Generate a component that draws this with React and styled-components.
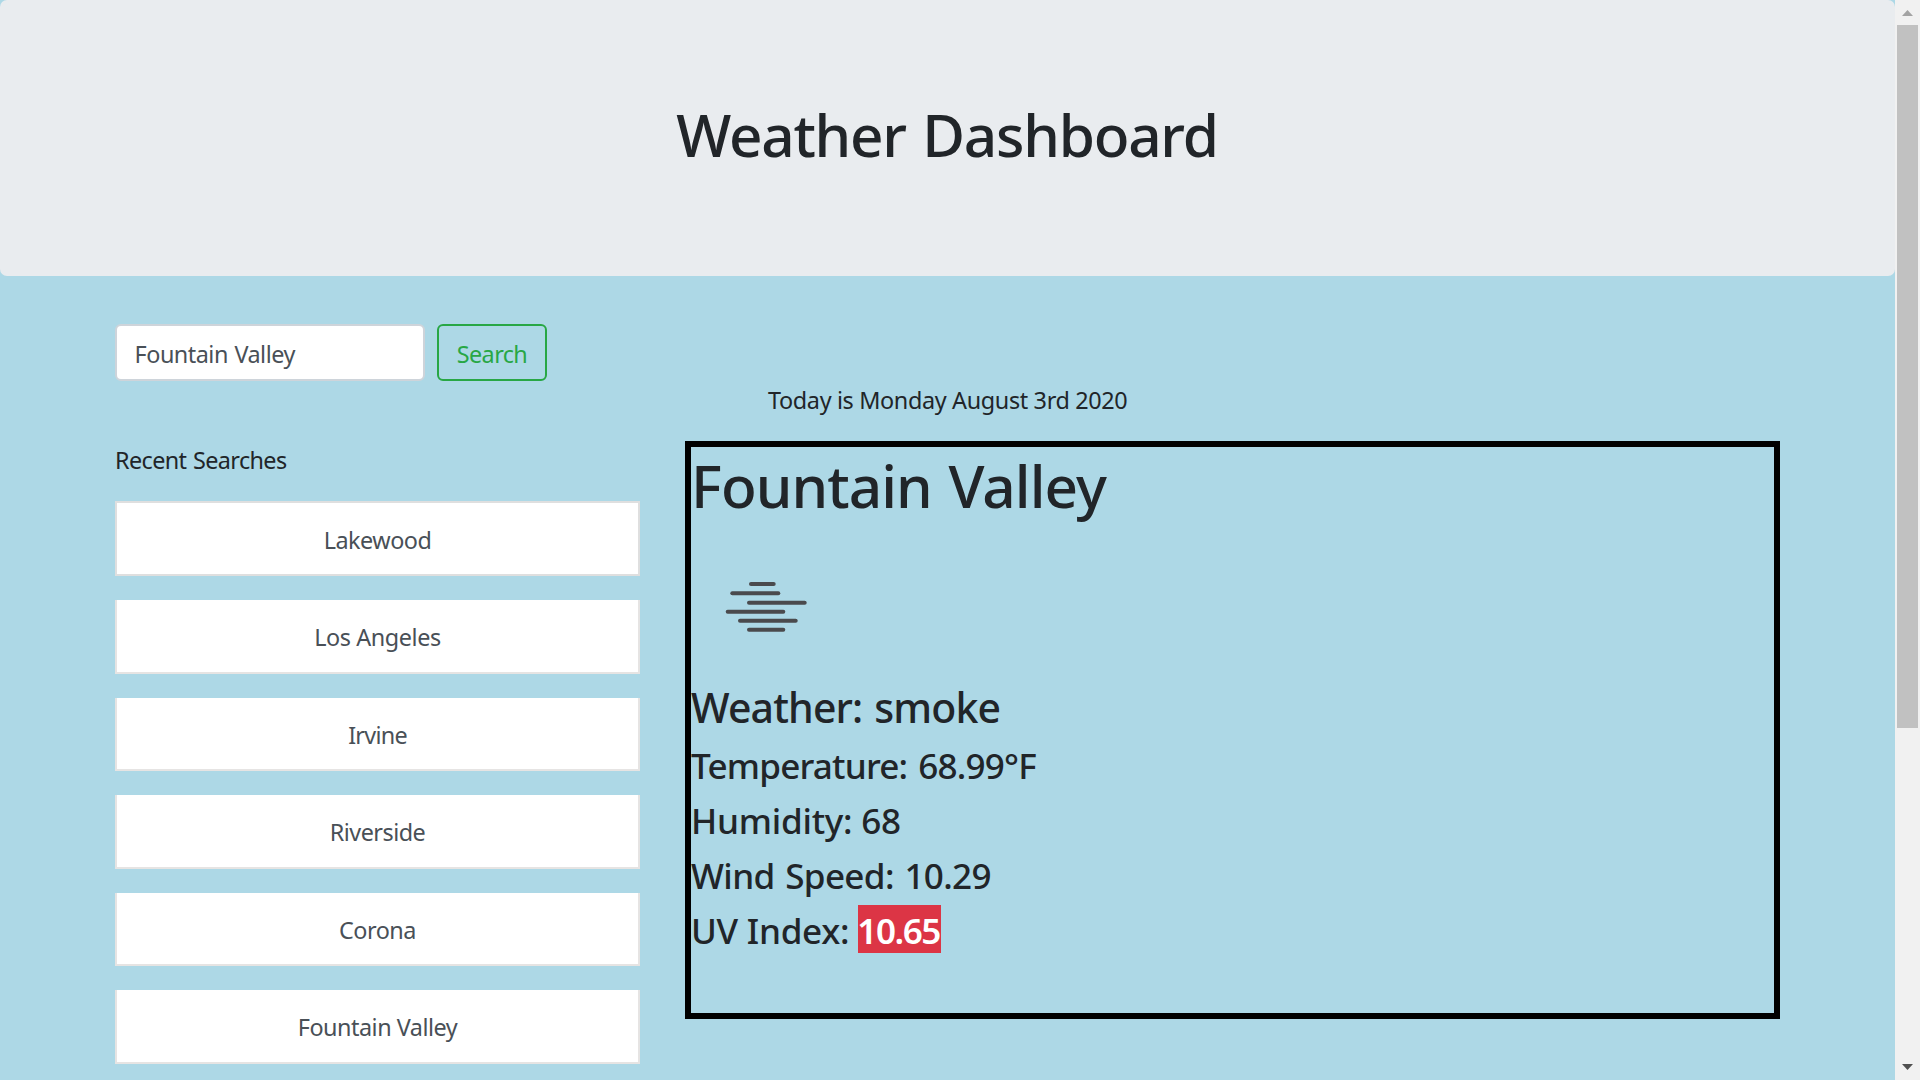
import React from "react";
import styled, { createGlobalStyle } from "styled-components";

const GlobalStyle = createGlobalStyle`
  *, *::before, *::after { box-sizing: border-box; }
  body {
    margin: 0;
    overflow: hidden;
    background: #add8e6;
    color: #212529;
    font-family: "Noto Sans", "Open Sans", sans-serif;
    font-size: 23.4px;
    line-height: 36px;
  }
`;

const Window = styled.div`
  display: flex;
  width: 1920px;
  height: 1080px;
  overflow: hidden;
`;

const Page = styled.div`
  flex: 1;
  min-width: 0;
`;

const Jumbotron = styled.header`
  height: 276px;
  padding: 98px 1px 0 0;
  border-radius: 7px;
  background: #e9ecef;
  text-align: center;
`;

const Heading = styled.h1`
  margin: 0;
  font-size: 58.5px;
  font-weight: 500;
  line-height: 72px;
  white-space: nowrap;
  word-spacing: 2.5px;
  letter-spacing: ${(p) => p.$tracking}px;
`;

const Main = styled.main`
  display: flex;
  align-items: flex-start;
  gap: 45px;
  padding: 48px 115px 0;
`;

const Sidebar = styled.aside`
  width: 525px;
`;

const SearchForm = styled.form`
  display: flex;
  gap: 12px;
  height: 57px;
`;

const SearchInput = styled.input`
  width: 310px;
  padding: 2px 17.6px 0;
  border: 2px solid #ced4da;
  border-radius: 6px;
  outline: none;
  background: #fff;
  color: #495057;
  font: inherit;
  letter-spacing: -0.5px;
  word-spacing: 1px;
`;

const SearchButton = styled.button`
  width: 110px;
  padding: 2px 0 0;
  border: 2px solid #28a745;
  border-radius: 6px;
  background: transparent;
  color: #28a745;
  font: inherit;
  letter-spacing: -0.6px;
`;

const RecentTitle = styled.p`
  margin: 61px 0 23px;
  letter-spacing: -0.6px;
  word-spacing: 1px;
`;

const RecentList = styled.ul`
  display: flex;
  flex-direction: column;
  gap: 24px;
  margin: 0;
  padding: 0;
  list-style: none;
`;

const RecentItem = styled.li`
  height: 73.5px;
  padding-top: 19px;
  border: 2px solid #e6e4e3;
  border-top: 0;
  background: #fff;
  color: #495057;
  text-align: center;
  letter-spacing: ${(p) => p.$tracking}px;

  &:first-child {
    height: 75px;
    border: 2px solid #dfdfdf;
  }
`;

const Content = styled.section`
  width: 1095px;
  padding-top: 58px;
`;

const Today = styled.p`
  margin: 0 0 23px;
  padding-left: 83px;
  letter-spacing: -0.35px;
`;

const WeatherCard = styled.article`
  height: 578px;
  padding-top: 2px;
  border: 6px solid #000;
`;

const SmokeIcon = styled.svg`
  display: block;
  width: 150px;
  height: 150px;
  margin-top: 11px;
`;

const Condition = styled.h2`
  margin: 0 0 12px;
  font-size: 41px;
  font-weight: 500;
  line-height: 50px;
  letter-spacing: -0.85px;
  word-spacing: 2px;
`;

const Reading = styled.h3`
  display: flex;
  align-items: baseline;
  gap: 9px;
  height: 43px;
  margin: 0 0 12px;
  font-size: 35.1px;
  font-weight: 500;
  line-height: 43px;
  word-spacing: ${(p) => p.$wordGap || 0}px;
  letter-spacing: ${(p) => p.$tracking}px;
`;

const UvBadge = styled.span`
  width: 83px;
  height: 48px;
  margin-top: -4px;
  background: #dc3545;
  color: #fff;
  font-weight: 600;
  line-height: 51px;
  letter-spacing: -1.5px;
  text-indent: -1px;
`;

const Scrollbar = styled.div`
  display: flex;
  flex-direction: column;
  align-items: center;
  width: 25px;
  background: #f1f1f1;
`;

const ScrollThumb = styled.div`
  width: 21px;
  height: 703px;
  margin: 9px 0 auto;
  background: #c1c1c1;
`;

const Arrow = styled.svg`
  display: block;
  width: 11px;
  height: 6px;
  margin: ${(p) => (p.$end ? "0 0 10px" : "10px 0 0")};
  fill: ${(p) => (p.$end ? "#505050" : "#a3a3a3")};
`;

const cities = [
  { name: "Lakewood", tracking: -0.5 },
  { name: "Los Angeles", tracking: -0.4 },
  { name: "Irvine", tracking: -0.75 },
  { name: "Riverside", tracking: -0.5 },
  { name: "Corona", tracking: -0.5 },
  { name: "Fountain Valley", tracking: -0.48 },
];

const smokeLines = [
  [60, 82.7, 52],
  [41.3, 87.3, 61.3],
  [58, 113.7, 70.7],
  [36.7, 92.3, 79.7],
  [49, 104.7, 88.7],
  [58, 92.3, 97.7],
];

export default function App() {
  return (
    <>
      <GlobalStyle />
      <Window>
        <Page>
          <Jumbotron>
            <Heading $tracking={-1.25}>Weather Dashboard</Heading>
          </Jumbotron>
          <Main>
            <Sidebar>
              <SearchForm>
                <SearchInput defaultValue="Fountain Valley" />
                <SearchButton type="button">Search</SearchButton>
              </SearchForm>
              <RecentTitle>Recent Searches</RecentTitle>
              <RecentList>
                {cities.map((c) => (
                  <RecentItem key={c.name} $tracking={c.tracking}>
                    {c.name}
                  </RecentItem>
                ))}
              </RecentList>
            </Sidebar>
            <Content>
              <Today>Today is Monday August 3rd 2020</Today>
              <WeatherCard>
                <Heading $tracking={-0.95}>Fountain Valley</Heading>
                <SmokeIcon viewBox="0 0 150 150" aria-hidden="true">
                  {smokeLines.map(([x1, x2, y]) => (
                    <line
                      key={y}
                      x1={x1}
                      x2={x2}
                      y1={y}
                      y2={y}
                      stroke="#4a4a4d"
                      strokeWidth="4"
                      strokeLinecap="round"
                    />
                  ))}
                </SmokeIcon>
                <Condition>Weather: smoke</Condition>
                <Reading $tracking={-0.8} $wordGap={2.5}>Temperature: 68.99°F</Reading>
                <Reading $tracking={-0.25}>Humidity: 68</Reading>
                <Reading $tracking={-0.67} $wordGap={2.2}>Wind Speed: 10.29</Reading>
                <Reading $tracking={-0.27}>
                  <span>UV Index:</span>
                  <UvBadge>10.65</UvBadge>
                </Reading>
              </WeatherCard>
            </Content>
          </Main>
        </Page>
        <Scrollbar>
          <Arrow viewBox="0 0 11 6">
            <path d="M5.5 0 L11 6 H0 Z" />
          </Arrow>
          <ScrollThumb />
          <Arrow $end viewBox="0 0 11 6">
            <path d="M0 0 H11 L5.5 6 Z" />
          </Arrow>
        </Scrollbar>
      </Window>
    </>
  );
}
